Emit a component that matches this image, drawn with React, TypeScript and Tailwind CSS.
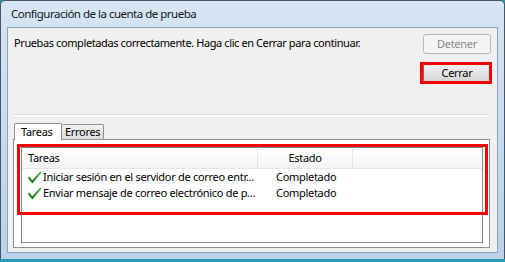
import React from "react";

function Check() {
  return (
    <svg width="15" height="13" viewBox="0 0 15 13" className="shrink-0">
      <defs>
        <linearGradient id="g" x1="0" y1="0" x2="0" y2="1">
          <stop offset="0" stopColor="#4cb84c" />
          <stop offset="1" stopColor="#12701a" />
        </linearGradient>
      </defs>
      <path d="M0.5 7 L2.3 5.6 L5.2 9.2 L13.2 0.5 L14.6 1.6 L5.4 12.6 Z" fill="url(#g)" />
    </svg>
  );
}

export default function App() {
  const font = { fontFamily: '"Noto Sans", "Open Sans", sans-serif' };
  return (
    <div className="w-[505px] h-[262px] flex flex-col bg-[#2a98ad] text-[11px] tracking-[-0.3px] text-black" style={font}>
      <div className="h-[259px] flex flex-col border-x border-t border-[#4a5564] rounded-t-[5px] bg-gradient-to-b from-[#d7e5f4] to-[#b9d1ea] px-[6px] pb-[6px]">
        <div className="h-[26px] flex items-center pl-[4px] text-[11.5px] tracking-[-0.5px] text-[#151515]">
          Configuración de la cuenta de prueba
        </div>
        <div className="flex-1 flex flex-col border border-[#8ea3bb] bg-[#f0f0f0] relative">
          <div className="flex justify-between pt-[6px] pl-[6px] pr-[6px]">
            <div className="mt-[1px] leading-[16px] tracking-[-0.4px]">
              Pruebas completadas correctamente. Haga clic en Cerrar para continuar.
            </div>
            <button className="w-[68px] h-[20px] border border-[#b5b9bc] rounded-[3px] bg-[#f4f4f4] text-[#8a8a8a] text-[11px] leading-[16px]">
              Detener
            </button>
          </div>
          <div className="flex justify-end pr-[6px] pt-[9px]">
            <button className="w-[68px] h-[20px] border border-[#707070] rounded-[3px] bg-gradient-to-b from-[#f2f2f2] via-[#e4e4e4] to-[#d2d2d2] text-[11px] leading-[16px]">
              Cerrar
            </button>
          </div>
          <div className="mt-[31px] ml-[4px] mr-[8px] border-t border-[#d5dfe5] border-b border-b-white" />
          <div className="mt-[6px] ml-[6px] flex items-end h-[17px]">
            <div className="w-[48px] h-[17px] border border-b-0 border-[#8e9196] rounded-t-[2px] bg-white pl-[6px] leading-[14px] pt-[1px] relative z-10 mb-[-1px]">
              Tareas
            </div>
            <div className="w-[42px] h-[15px] border border-l-0 border-b-0 border-[#8e9196] rounded-t-[2px] bg-gradient-to-b from-[#f3f3f3] to-[#dcdcdc] pl-[3px] leading-[14px] whitespace-nowrap overflow-hidden">
              Errores
            </div>
          </div>
          <div className="flex-1 ml-[5px] mr-[7px] mb-[4px] border border-[#8e9196] bg-white pt-[7px] pl-[7px] pr-[6px] pb-[4px] flex">
            <div className="flex-1 border border-[#828790] bg-white flex flex-col">
              <div className="h-[21px] flex bg-gradient-to-b from-[#ffffff] to-[#f3f4f6] border-b border-[#e5e6e8]">
                <div className="w-[236px] border-r border-[#e3e4e6] pl-[6px] flex items-center">Tareas</div>
                <div className="w-[95px] border-r border-[#e3e4e6] flex items-center justify-center">Estado</div>
                <div className="flex-1" />
              </div>
              {[
                "Iniciar sesión en el servidor de correo entr...",
                "Enviar mensaje de correo electrónico de p...",
              ].map((t, i) => (
                <div key={i} className="h-[16px] flex items-center">
                  <div className="w-[236px] flex items-center pl-[5px] overflow-hidden whitespace-nowrap">
                    <Check />
                    <span className="ml-[1px]">{t}</span>
                  </div>
                  <div className="pl-[18px]">Completado</div>
                </div>
              ))}
            </div>
          </div>
          <div className="absolute left-[412px] top-[34px] w-[72px] h-[22px] border-[3px] border-[#ff0000]" />
          <div className="absolute left-[9px] top-[116px] w-[471px] h-[71px] border-[3px] border-[#ff0000]" />
        </div>
      </div>
    </div>
  );
}
